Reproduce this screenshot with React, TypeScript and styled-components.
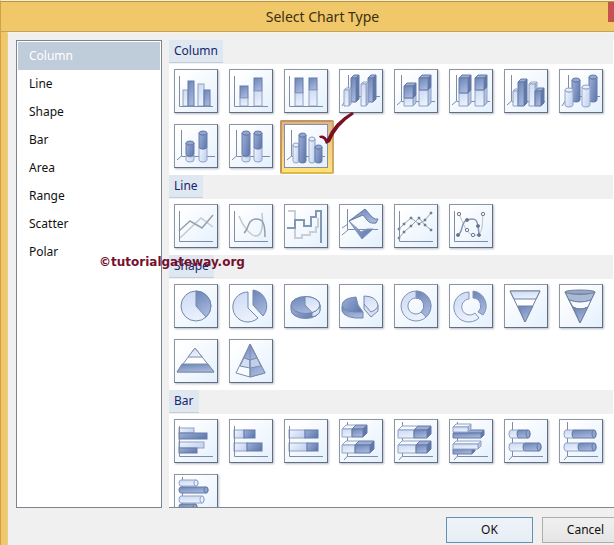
import React, { useState } from "react";
import styled, { createGlobalStyle, css } from "styled-components";

const GlobalStyle = createGlobalStyle`
  *, *::before, *::after { box-sizing: border-box; }
  body {
    margin: 0;
    overflow: hidden;
    font-family: "Noto Sans", "Open Sans", sans-serif;
    font-size: 12px;
    line-height: 16px;
    color: #111;
  }
  button { font: inherit; color: inherit; }
`;

/* ---------- window chrome ---------- */

const Dialog = styled.main`
  position: relative;
  display: flex;
  flex-direction: column;
  height: 100vh;
  overflow: hidden;
  background: #f0c769;
  border-top: 1px solid #fdf0c4;
  border-left: 1px solid #d2a04a;
`;

const TitleBar = styled.header`
  display: flex;
  align-items: flex-start;
  flex: none;
  height: 31px;
  border-top: 1px solid #b5934f;
  border-bottom: 1px solid #c3a25a;
`;

const Title = styled.h1`
  flex: 1;
  margin: 0;
  padding-left: 36px;
  font-size: 14px;
  font-weight: 400;
  line-height: 29px;
  text-align: center;
  color: #3f2f10;
`;

const CloseButton = styled.button`
  flex: none;
  width: 45px;
  height: 20px;
  margin-right: -39px;
  padding: 0;
  border: 0;
  background: #c75050;
`;

const Body = styled.div`
  display: flex;
  flex-direction: column;
  flex: 1;
  min-height: 0;
  margin-left: 6px;
  padding: 7px 0 2px 8px;
  background: #f0f0f0;
  border-top: 1px solid #fbf3da;
  border-left: 1px solid #e6cf95;
`;

const Panels = styled.div`
  display: flex;
  flex: 1;
  gap: 7px;
  min-height: 0;
`;

/* ---------- category list ---------- */

const Sidebar = styled.nav`
  flex: none;
  width: 146px;
  padding: 1px;
  background: #fff;
  border: 1px solid #7d848c;
`;

const CategoryList = styled.ul`
  margin: 0;
  padding: 0;
  list-style: none;
`;

const Category = styled.button<{ $active: boolean }>`
  display: block;
  width: 100%;
  height: 28px;
  padding: 0 11px;
  border: 0;
  text-align: left;
  background: ${(p) => (p.$active ? "#bfccda" : "transparent")};
  color: ${(p) => (p.$active ? "#fff" : "#111")};
`;

/* ---------- gallery ---------- */

const Gallery = styled.div`
  flex: 1;
  min-width: 0;
  overflow: hidden;
  padding-right: 1px;
  background: #fff;
  border-bottom: 1px solid #84888c;
`;

const GroupHeader = styled.div`
  display: flex;
  height: 24px;
  padding-bottom: 1px;
  background: #f0f0f0;
`;

const GroupTitle = styled.h2`
  margin: 0;
  padding: 0 5px;
  font-size: 12px;
  font-weight: 400;
  line-height: 22px;
  color: #17256b;
  background: #dfe8f1;
  border-bottom: 1px solid #c3ced9;
`;

const Tiles = styled.div`
  display: flex;
  flex-wrap: wrap;
  gap: 11px;
  padding: 5px 5px 7px;
`;

const Tile = styled.button<{ $selected: boolean }>`
  position: relative;
  width: 44px;
  height: 44px;
  padding: 0;
  background: linear-gradient(135deg, #fff 15%, #e4f0fd);
  border: 1px solid #8d97a3;
  border-right-color: #626d80;
  border-bottom-color: #626d80;
  box-shadow: 1px 1px 2px #b4bbc6;
  svg { display: block; }
  ${(p) =>
    p.$selected &&
    css`
      z-index: 0;
      background: none;
      box-shadow: none;
      &::before {
        content: "";
        position: absolute;
        z-index: -1;
        inset: -5px -7px -7px -5px;
        border: 2px solid #c4955c;
        border-bottom-color: #dcb94e;
        border-right-color: #d0a960;
        border-radius: 2px;
        background: linear-gradient(#dcb591, #f4cf85 50%, #ffe27a);
      }
    `}
`;

const Art = styled.svg<{ $selected: boolean }>`
  ${(p) =>
    p.$selected &&
    css`
      background: linear-gradient(135deg, #fff 15%, #e4f0fd);
      box-shadow: 0 0 0 1px #8a8f9c;
    `}
`;

const TickMark = styled.svg`
  position: absolute;
  left: 33px;
  top: -14px;
  pointer-events: none;
`;

/* ---------- footer ---------- */

const Footer = styled.footer`
  display: flex;
  flex: none;
  justify-content: flex-end;
  gap: 9px;
  margin-right: -15px;
  padding-top: 9px;
`;

const ActionButton = styled.button<{ $primary?: boolean }>`
  width: 87px;
  height: 26px;
  padding: 0;
  background: ${(p) => (p.$primary ? "linear-gradient(#eef3f8, #e6eef5)" : "linear-gradient(#f0f0f0, #e5e5e5)")};
  border: 1px solid ${(p) => (p.$primary ? "#5f92b5" : "#adadad")};
`;

const Watermark = styled.p`
  position: absolute;
  left: 98px;
  top: 253px;
  margin: 0;
  font: 700 12px/16px "DejaVu Sans", sans-serif;
  color: #75102f;
`;

/* ---------- icon drawing ---------- */

type Tone = "l" | "d";
const INK = "#7e8ca6";
const fillV = (t: Tone) => (t === "l" ? "url(#lightV)" : "url(#darkV)");
const fillH = (t: Tone) => (t === "l" ? "url(#lightH)" : "url(#darkH)");
const edge = (t: Tone) => (t === "l" ? "#91a2c4" : "#667aa5");

const Gradients = styled.svg`
  position: absolute;
  width: 0;
  height: 0;
`;

function IconGradients() {
  const grad = (id: string, a: string, b: string, x2: string, y2: string) => (
    <linearGradient id={id} x1="0" y1="0" x2={x2} y2={y2}>
      <stop offset="0" stopColor={a} />
      <stop offset="1" stopColor={b} />
    </linearGradient>
  );
  return (
    <Gradients aria-hidden="true">
      <defs>
        {grad("lightV", "#cbd9f2", "#eaf1fd", "0.3", "1")}
        {grad("darkV", "#6c84b6", "#a3b6dc", "0.4", "1")}
        {grad("lightH", "#f1f6ff", "#c6d5f1", "1", "0.4")}
        {grad("darkH", "#9cb0d9", "#657eb2", "1", "0.5")}
      </defs>
    </Gradients>
  );
}

type P = { x: number; y: number; w: number; h: number; t: Tone };

const Bar = ({ x, y, w, h, t, flat }: P & { flat?: boolean }) => (
  <rect x={x} y={y} width={w} height={h} fill={flat ? fillH(t) : fillV(t)} stroke={edge(t)} />
);

const Box = ({ x, y, w, h, t, d = 3 }: P & { d?: number }) => (
  <g stroke={edge(t)} strokeLinejoin="round">
    <path d={`M${x} ${y}l${d} ${-d}h${w}l${-d} ${d}z`} fill={t === "l" ? "#f5f8ff" : "#9aaed5"} />
    <path d={`M${x + w} ${y}l${d} ${-d}v${h}l${-d} ${d}z`} fill={t === "l" ? "#b4c5e6" : "#5f78ac"} />
    <rect x={x} y={y} width={w} height={h} fill={fillV(t)} />
  </g>
);

const Cyl = ({ x, y, w, h, t, cap = true }: P & { cap?: boolean }) => {
  const r = w / 2;
  return (
    <g stroke={edge(t)}>
      <path d={`M${x} ${y}v${h}a${r} 2 0 0 0 ${w} 0v${-h}a${r} 2 0 0 1 ${-w} 0z`} fill={fillH(t)} />
      {cap && <ellipse cx={x + r} cy={y} rx={r} ry="2" fill={t === "l" ? "#e6eefb" : "#91a7d1"} />}
    </g>
  );
};

const HCyl = ({ x, y, w, h, t, cap = true }: P & { cap?: boolean }) => {
  const r = h / 2;
  return (
    <g stroke={edge(t)}>
      <path d={`M${x} ${y}h${w}a2 ${r} 0 0 1 0 ${h}h${-w}a2 ${r} 0 0 1 0 ${-h}z`} fill={fillV(t)} />
      {cap && <ellipse cx={x + w} cy={y + r} rx="2" ry={r} fill={t === "l" ? "#e9f0fc" : "#8ea5d0"} />}
    </g>
  );
};

const Axis = () => <path d="M5.500 7V37.500H39" fill="none" stroke={INK} />;
const Axis3 = () => <path d="M7.500 6V32L3 36M7.500 32.500H41" fill="none" stroke={INK} />;
const AxisBack = () => <path d="M9.500 6V27M3 37L9 27.500H41" fill="none" stroke={INK} />;
const BarAxis3 = () => <path d="M8.500 3V37L5 41M8.500 37.500H39" fill="none" stroke={INK} />;

const dots = (points: number[][], fill = "#59647a", r = 1.7) =>
  points.map(([x, y]) => <circle key={`${x}-${y}`} cx={x} cy={y} r={r} fill={fill} stroke="#707b8e" strokeWidth="1" />);

type Entry = { name: string; art: React.ReactNode };

const columnIcons: Entry[] = [
  { name: "Clustered column", art: <><Bar x={9} y={21} w={5} h={16} t="l" /><Bar x={14} y={12} w={6} h={25} t="d" /><Bar x={24} y={15} w={6} h={22} t="l" /><Bar x={30} y={21} w={6} h={16} t="d" /><Axis /></> },
  { name: "Stacked column", art: <><Bar x={11} y={17} w={8} h={12} t="d" /><Bar x={11} y={29} w={8} h={8} t="l" /><Bar x={25} y={9} w={8} h={13} t="d" /><Bar x={25} y={22} w={8} h={15} t="l" /><Axis /></> },
  { name: "100% stacked column", art: <><Bar x={11} y={9} w={8} h={15} t="d" /><Bar x={11} y={24} w={8} h={13} t="l" /><Bar x={25} y={9} w={8} h={12} t="d" /><Bar x={25} y={21} w={8} h={16} t="l" /><Axis /></> },
  { name: "3-D column", art: <><AxisBack /><Box x={12} y={9} w={5} h={24} t="d" /><Box x={5} y={21} w={5} h={16} t="l" d={2} /><Box x={29} y={9} w={5} h={24} t="d" /><Box x={22} y={15} w={5} h={22} t="l" d={2} /></> },
  { name: "3-D stacked column", art: <><Axis3 /><Box x={10} y={29} w={9} h={8} t="l" /><Box x={10} y={17} w={9} h={12} t="d" /><Box x={25} y={21} w={9} h={16} t="l" /><Box x={25} y={9} w={9} h={12} t="d" /></> },
  { name: "3-D 100% stacked column", art: <><Axis3 /><Box x={10} y={24} w={9} h={13} t="l" /><Box x={10} y={9} w={9} h={15} t="d" /><Box x={26} y={21} w={9} h={16} t="l" /><Box x={26} y={9} w={9} h={12} t="d" /></> },
  { name: "3-D clustered column", art: <><Axis3 /><Box x={9} y={22} w={5} h={15} t="l" d={2} /><Box x={14} y={13} w={6} h={24} t="d" d={3} /><Box x={25} y={15} w={6} h={22} t="l" d={2} /><Box x={31} y={22} w={6} h={15} t="d" d={3} /></> },
  { name: "3-D cylinder", art: <><AxisBack /><Cyl x={13} y={11} w={8} h={20} t="d" /><Cyl x={6} y={21} w={8} h={15} t="l" /><Cyl x={30} y={8} w={8} h={23} t="d" /><Cyl x={23} y={18} w={8} h={18} t="l" /></> },
  { name: "Stacked cylinder", art: <><Axis3 /><Cyl x={12} y={31} w={8} h={5} t="l" cap={false} /><Cyl x={12} y={19} w={8} h={11} t="d" /><Cyl x={25} y={23} w={8} h={13} t="l" cap={false} /><Cyl x={25} y={9} w={8} h={14} t="d" /></> },
  { name: "100% stacked cylinder", art: <><Axis3 /><Cyl x={13} y={31} w={8} h={5} t="l" cap={false} /><Cyl x={13} y={9} w={8} h={21} t="d" /><Cyl x={25} y={23} w={8} h={13} t="l" cap={false} /><Cyl x={25} y={9} w={8} h={14} t="d" /></> },
  { name: "Clustered cylinder", art: <><Axis3 /><Cyl x={9} y={21} w={6} h={16} t="l" /><Cyl x={15} y={11} w={7} h={26} t="d" /><Cyl x={25} y={15} w={6} h={22} t="l" /><Cyl x={31} y={23} w={7} h={14} t="d" /></> },
];

const lineIcons: Entry[] = [
  { name: "Line", art: <g fill="none"><path d="M6 34L27 14L39 23" stroke="#c3cad0" strokeWidth="1.500" /><path d="M5 27L16 17L28 24L39 11" stroke="#98a2af" strokeWidth="1.500" /><Axis /></g> },
  { name: "Smooth line", art: <g fill="none" strokeWidth="1.500"><path d="M10 12C14 23 22 32 27 32C34 32 34 18 33 9" stroke="#c0c8cf" /><path d="M15 29C20 26 18 15 27 15C34 15 36 19 36 33" stroke="#929cab" /><g strokeWidth="1"><Axis /></g></g> },
  { name: "Stepped line", art: <g fill="none"><path d="M4 7H11V34H18V31H26V28H32V23H34V14" stroke="#c8d0d7" strokeWidth="2" /><path d="M3 24H11V16H20V22H27V13H32V7H37V39" stroke="#8299b6" strokeWidth="2" /></g> },
  { name: "3-D line", art: <><path d="M8.500 5V25.500H39" fill="none" stroke={INK} /><path d="M10 17L22 28L28 25H34L23 35z" fill="url(#darkH)" stroke="#8295b9" /><path d="M3 24L9 20M3 31L9 26" stroke={INK} /><path d="M10 17L26 5L33 13Q36 16 39 15L37 19Q31 20 28 16L24 11z" fill="url(#darkV)" stroke="#667aa6" /></> },
  { name: "Scatter with lines", art: <g fill="none"><path d="M5 25L10 20L17 14L25 20L31 16L37 9M5 34L10 28L17 22L25 14L31 21L37 26" stroke="#98a1b0" />{dots([[5, 25], [10, 20], [17, 14], [25, 20], [31, 16], [37, 9], [5, 34], [10, 28], [17, 22], [25, 14], [31, 21], [37, 26]], "#59647a", 1)}<Axis /></g> },
  { name: "Scatter with smooth lines", art: <g fill="none"><path d="M10 10C14 18 17 30 24 31C35 33 33 19 34 10" stroke="#b9c1cb" /><path d="M9 31C14 29 12 17 18 16C27 13 29 15 30 31" stroke="#8398b9" strokeWidth="1.500" />{dots([[10, 10], [18, 26], [24, 31], [34, 10]], "#eef3fa")}{dots([[9, 31], [18, 16], [29, 22], [30, 31]], "#66738c", 1.5)}<Axis /></g> },
];

const shapeIcons: Entry[] = [
  { name: "Pie", art: <g stroke="#7587aa"><circle cx="22" cy="22" r="15" fill="url(#lightV)" /><path d="M22 7A15 15 0 0 1 32 33L22 22z" fill="url(#darkV)" /></g> },
  { name: "Exploded pie", art: <g stroke="#7587aa" strokeLinejoin="round"><path d="M19 8A15 15 0 1 0 29 34L19 24z" fill="url(#lightV)" /><path d="M24 6A16 16 0 0 1 34 32L24 21z" fill="url(#darkV)" /></g> },
  { name: "3-D pie", art: <g stroke="#7587aa" strokeLinejoin="round"><path d="M7 21V26A14.500 8.500 0 0 0 36 26V21z" fill="url(#darkH)" /><path d="M28 28V33Q36 31 36 26V21z" fill="#dce6f7" /><ellipse cx="21.500" cy="21" rx="14.500" ry="8.500" fill="url(#darkV)" /><path d="M21 12.500A14.500 8.500 0 0 1 28 28.500L21 21z" fill="url(#lightV)" /></g> },
  { name: "3-D exploded pie", art: <g stroke="#7587aa" strokeLinejoin="round"><path d="M3 22V27Q6 35 24 34V28L17 22z" fill="url(#darkV)" /><path d="M17 13Q4 14 3 21Q4 29 24 28L19 21z" fill="url(#darkH)" /><path d="M25 20V25L32 33L39 27V21z" fill="#d5e0f4" /><path d="M25 12Q37 12 39 21Q39 25 32 28L25 20z" fill="url(#lightV)" /></g> },
  { name: "Doughnut", art: <g stroke="#8193b5"><path fillRule="evenodd" d="M22 7a15 15 0 1 0 .1 0zM22 14a8 8 0 1 1 -.1 0z" fill="url(#lightV)" /><path d="M22 7A15 15 0 0 1 32 33L27 28A8 8 0 0 0 22 14z" fill="url(#darkV)" /></g> },
  { name: "Exploded doughnut", art: <g stroke="#8193b5"><path d="M20 8A15 15 0 1 0 30 34L26 29A8 8 0 1 1 20 15z" fill="url(#lightV)" /><path d="M24 7A15 15 0 0 1 34 31L29 28A8 8 0 0 0 24 14z" fill="url(#darkV)" /></g> },
  { name: "Funnel", art: <g stroke="#71829f" strokeLinejoin="round"><path d="M6 7H36L21 38z" fill="#fff" /><path d="M6 7H36L32 15H10z" fill="url(#lightV)" /><path d="M14 22H29L21 38z" fill="url(#darkV)" /></g> },
  { name: "3-D funnel", art: <g stroke="#71829f" strokeLinejoin="round"><path d="M6 8L21 39L36 8z" fill="url(#lightH)" /><path d="M6 8Q21 13 36 8L32 16Q21 20 10 16z" fill="#a9b9d6" /><path d="M10 16Q21 20 32 16L29 23Q21 27 14 23z" fill="#f7faff" /><path d="M14 23Q21 27 29 23L21 39z" fill="url(#darkV)" /><ellipse cx="21" cy="8" rx="15" ry="2" fill="#94a7c7" /></g> },
  { name: "Pyramid", art: <g stroke="#7f8ca6" strokeLinejoin="round"><path d="M21 9L40 33H3z" fill="#fff" /><path d="M21 9L28 18H14z" fill="url(#lightV)" /><path d="M8 25H34L40 33H3z" fill="url(#darkV)" /></g> },
  { name: "3-D pyramid", art: <g stroke="#7d8cab" strokeLinejoin="round"><path d="M21 5L7 34L21 38L36 34z" fill="#f8fbff" /><path d="M21 5L36 34L21 38z" fill="url(#darkV)" /><path d="M21 5L15 19L21 21L28 19z" fill="url(#darkV)" /><path d="M15 19L21 21V29L11 27z" fill="#d1def3" /><path d="M21 21L28 19L32 27L21 29z" fill="#c0cfea" /><path d="M21 5V38" /></g> },
];

const barIcons: Entry[] = [
  { name: "Clustered bar", art: <><Bar flat x={5} y={9} w={15} h={5} t="l" /><Bar flat x={5} y={14} w={28} h={6} t="d" /><Bar flat x={5} y={23} w={25} h={6} t="l" /><Bar flat x={5} y={29} w={18} h={5} t="d" /><Axis /></> },
  { name: "Stacked bar", art: <><Bar flat x={5} y={11} w={10} h={8} t="l" /><Bar flat x={15} y={11} w={11} h={8} t="d" /><Bar flat x={5} y={24} w={13} h={8} t="l" /><Bar flat x={18} y={24} w={15} h={8} t="d" /><Axis /></> },
  { name: "100% stacked bar", art: <><Bar flat x={5} y={11} w={16} h={8} t="l" /><Bar flat x={21} y={11} w={13} h={8} t="d" /><Bar flat x={5} y={24} w={18} h={8} t="l" /><Bar flat x={23} y={24} w={11} h={8} t="d" /><Axis /></> },
  { name: "3-D stacked bar", art: <><BarAxis3 /><Box x={3} y={10} w={10} h={8} t="l" d={4} /><Box x={13} y={10} w={11} h={8} t="d" d={4} /><Box x={3} y={26} w={13} h={8} t="l" d={4} /><Box x={16} y={26} w={15} h={8} t="d" d={4} /></> },
  { name: "3-D 100% stacked bar", art: <><BarAxis3 /><Box x={4} y={11} w={16} h={8} t="l" d={4} /><Box x={20} y={11} w={13} h={8} t="d" d={4} /><Box x={4} y={26} w={18} h={8} t="l" d={4} /><Box x={22} y={26} w={11} h={8} t="d" d={4} /></> },
  { name: "3-D clustered bar", art: <><BarAxis3 /><Box x={4} y={14} w={28} h={5} t="d" /><Box x={4} y={8} w={15} h={5} t="l" /><Box x={4} y={30} w={19} h={5} t="d" /><Box x={4} y={25} w={25} h={5} t="l" /></> },
  { name: "Stacked cylinder bar", art: <><BarAxis3 /><HCyl x={7} y={11} w={8} h={8} t="l" cap={false} /><HCyl x={15} y={11} w={9} h={8} t="d" /><HCyl x={7} y={24} w={13} h={8} t="l" cap={false} /><HCyl x={21} y={24} w={14} h={8} t="d" /></> },
  { name: "100% stacked cylinder bar", art: <><BarAxis3 /><HCyl x={7} y={11} w={8} h={8} t="l" cap={false} /><HCyl x={15} y={11} w={20} h={8} t="d" /><HCyl x={7} y={24} w={13} h={8} t="l" cap={false} /><HCyl x={21} y={24} w={14} h={8} t="d" /></> },
  { name: "Clustered cylinder bar", art: <><BarAxis3 /><HCyl x={7} y={6} w={15} h={6} t="l" /><HCyl x={7} y={13} w={25} h={6} t="d" /><HCyl x={7} y={22} w={21} h={7} t="l" /><HCyl x={7} y={30} w={14} h={6} t="d" /></> },
];

const groups = [
  { title: "Column", icons: columnIcons },
  { title: "Line", icons: lineIcons },
  { title: "Shape", icons: shapeIcons },
  { title: "Bar", icons: barIcons },
];

const categories = ["Column", "Line", "Shape", "Bar", "Area", "Range", "Scatter", "Polar"];

export default function App() {
  const [category, setCategory] = useState("Column");
  const [chart, setChart] = useState("Clustered cylinder");

  return (
    <Dialog>
      <GlobalStyle />
      <IconGradients />
      <TitleBar>
        <Title>Select Chart Type</Title>
        <CloseButton type="button" aria-label="Close" />
      </TitleBar>
      <Body>
        <Panels>
          <Sidebar aria-label="Chart categories">
            <CategoryList>
              {categories.map((c) => (
                <li key={c}>
                  <Category type="button" $active={c === category} onClick={() => setCategory(c)}>
                    {c}
                  </Category>
                </li>
              ))}
            </CategoryList>
          </Sidebar>
          <Gallery>
            {groups.map((g) => (
              <section key={g.title}>
                <GroupHeader>
                  <GroupTitle>{g.title}</GroupTitle>
                </GroupHeader>
                <Tiles>
                  {g.icons.map(({ name, art }) => (
                    <Tile
                      key={name}
                      type="button"
                      aria-label={name}
                      aria-pressed={name === chart}
                      $selected={name === chart}
                      onClick={() => setChart(name)}
                    >
                      <Art $selected={name === chart} width="42" height="42" viewBox="1 1 42 42" aria-hidden="true">
                        {art}
                      </Art>
                      {name === chart && (
                        <TickMark width="40" height="36" viewBox="0 0 40 36" aria-hidden="true">
                          <path
                            d="M1 25Q6 23 9 28Q16 11 34 1L36 3Q19 14 12 31L8 33Q6 26 2 27z"
                            fill="#7b1025"
                          />
                        </TickMark>
                      )}
                    </Tile>
                  ))}
                </Tiles>
              </section>
            ))}
          </Gallery>
        </Panels>
        <Footer>
          <ActionButton type="button" $primary>OK</ActionButton>
          <ActionButton type="button">Cancel</ActionButton>
        </Footer>
      </Body>
      <Watermark>©tutorialgateway.org</Watermark>
    </Dialog>
  );
}
